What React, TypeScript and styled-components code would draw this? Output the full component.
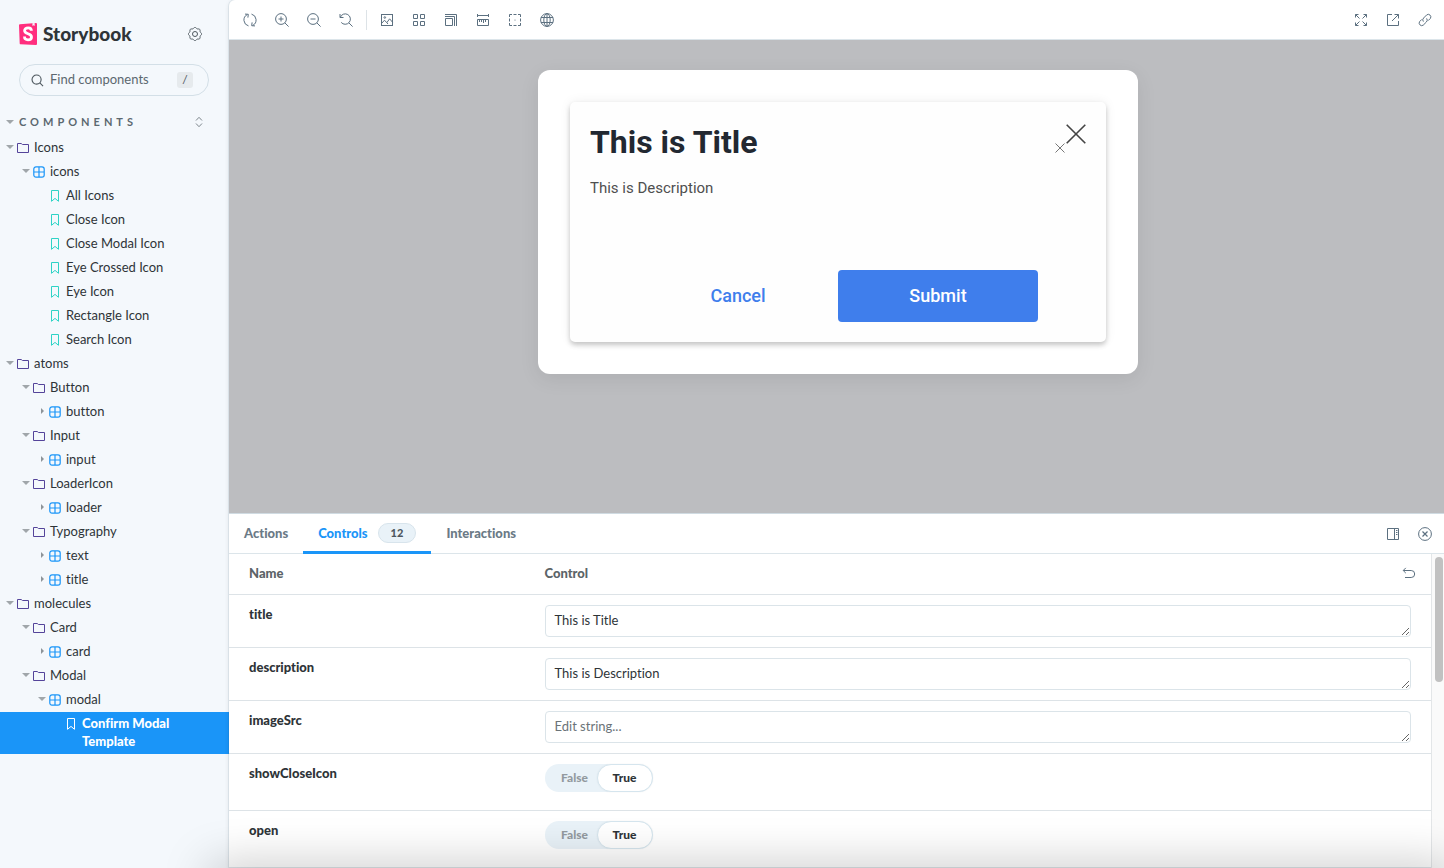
import React from "react";
import styled, { createGlobalStyle } from "styled-components";

const UI_FONT = `Lato, "Liberation Sans", sans-serif`;
const STORY_FONT = `Roboto, "Liberation Sans", sans-serif`;

const GlobalStyle = createGlobalStyle`
  *, *::before, *::after { box-sizing: border-box; }
  body {
    margin: 0;
    background: #f4f8fc;
    font-family: ${UI_FONT};
    font-variant-ligatures: none;
    color: #2e3438;
  }
  button, input, textarea { font-family: inherit; font-variant-ligatures: inherit; }
  button { border: 0; background: none; padding: 0; cursor: pointer; color: inherit; }
`;

/* ---------- icons ---------- */

const Svg = styled.svg<{ $size: number }>`
  display: block;
  flex: none;
  width: ${(p) => p.$size}px;
  height: ${(p) => p.$size}px;
  fill: none;
  stroke: currentColor;
  stroke-width: ${(p) => (p.$size === 12 ? 1.2 : 1)};
`;

type IconProps = { size?: number; children: React.ReactNode };
const Icon = ({ size = 14, children }: IconProps) => (
  <Svg $size={size} viewBox={size === 12 ? "0 0 12 12" : "0 0 14 14"} aria-hidden="true">
    {children}
  </Svg>
);

const gearPath =
  Array.from({ length: 97 }, (_, i) => {
    const t = (i / 96) * Math.PI * 2;
    const r = 6.1 + 0.5 * Math.cos(8 * t);
    return `${i ? "L" : "M"}${(7 + r * Math.cos(t)).toFixed(2)} ${(7 + r * Math.sin(t)).toFixed(2)}`;
  }).join("") + "Z";

const icons = {
  gear: (
    <>
      <path d={gearPath} />
      <circle cx="7" cy="7" r="2.5" />
    </>
  ),
  search: (
    <>
      <circle cx="6" cy="6" r="4.9" strokeWidth="1.2" />
      <path strokeWidth="1.2" d="M9.5 9.5L13 13" />
    </>
  ),
  sync: (
    <>
      <path d="M5.5 12.9A6.1 6.1 0 0 1 4.2 1.6M2 1.1L5.3 1.3L4.9 4.6" />
      <path d="M8.5 1.1A6.1 6.1 0 0 1 9.8 12.4M12 12.9L8.7 12.7L9.1 9.4" />
    </>
  ),
  zoomIn: (
    <>
      <circle cx="6" cy="6" r="5.4" />
      <path d="M9.8 9.8L13.6 13.6M6 3.5V8.5M3.5 6H8.5" />
    </>
  ),
  zoomOut: (
    <>
      <circle cx="6" cy="6" r="5.4" />
      <path d="M9.8 9.8L13.6 13.6M3.5 6H8.5" />
    </>
  ),
  zoomReset: <path d="M1 1V4.5H4.5M1.3 4.3A5.2 5.2 0 1 1 2.2 9.4M9.8 9.8L13.6 13.6" />,
  photo: (
    <>
      <rect x="1.5" y="1.5" width="11" height="11" />
      <circle cx="4.8" cy="4.5" r="0.8" />
      <path d="M1.5 10.5L4.5 7.2L6.8 9.7L9.6 5.8L12.5 9.2M6.8 9.7L8 11" />
    </>
  ),
  grid: (
    <path d="M1.5 1.5H5.5V5.5H1.5ZM8.5 1.5H12.5V5.5H8.5ZM1.5 8.5H5.5V12.5H1.5ZM8.5 8.5H12.5V12.5H8.5Z" />
  ),
  grow: <path d="M1.5 5.5H8.5V12.5H1.5ZM1 3.5H10.5V13M1 1.5H12.5V13" />,
  ruler: (
    <path d="M1.5 1V4M12.5 1V4M1.5 2.5H12.5M1.5 6.5H12.5V12.5H1.5ZM3.5 6.5V9M5.5 6.5V9M7.5 6.5V10M9.5 6.5V9" />
  ),
  outline: (
    <>
      <path d="M1.5 4V1.5H4M10 1.5H12.5V4M12.5 10V12.5H10M4 12.5H1.5V10M5.5 1.5H8.5M5.5 12.5H8.5M1.5 5.5V8.5M12.5 5.5V8.5" />
      <circle cx="7" cy="7" r="0.6" fill="currentColor" stroke="none" />
    </>
  ),
  globe: (
    <>
      <circle cx="7" cy="7" r="6.4" />
      <ellipse cx="7" cy="7" rx="3.2" ry="6.4" />
      <path d="M7 .6V13.4M1 4.5H13M1 9.5H13" />
    </>
  ),
  expand: (
    <path d="M1.5 4.5V1.5H4.5M9.5 1.5H12.5V4.5M12.5 9.5V12.5H9.5M4.5 12.5H1.5V9.5M1.5 1.5L5.5 5.5M12.5 1.5L8.5 5.5M12.5 12.5L8.5 8.5M1.5 12.5L5.5 8.5" />
  ),
  share: <path d="M6 1.5H1.5V12.5H12.5V8M8.5 1.5H12.5V5.5M12.5 1.5L6 8" />,
  link: (
    <path d="M5.4 8.6A2.7 2.7 0 0 1 5.6 5L8.8 1.8A2.6 2.6 0 0 1 12.4 5.4L10.2 7.6M8.6 5.4A2.7 2.7 0 0 1 8.4 9L5.2 12.2A2.6 2.6 0 0 1 1.6 8.6L3.8 6.4" />
  ),
  sidebarRight: <path d="M1.5 1.5H12.5V12.5H1.5ZM8.5 1.5V12.5M10 3.5H11.5M10 5.5H11.5M10 7.5H11.5" />,
  close: (
    <>
      <circle cx="7" cy="7" r="6.4" />
      <path strokeWidth="1.2" d="M4.5 4.5L9.5 9.5M9.5 4.5L4.5 9.5" />
    </>
  ),
  undo: <path d="M3.8 1.9L1.2 4.5L3.8 7.1M1.4 4.5H9.2A3.5 3.5 0 0 1 9.2 11.5H3" />,
  expandAll: <path strokeWidth="1" d="M3 4.5L6 1.3L9 4.5M3 7.5L6 10.7L9 7.5" />,
  folder: <path strokeWidth="1" d="M.5 10.5V1.5H4.2L5.5 2.5H11.5V10.5Z" />,
  component: (
    <>
      <rect x=".8" y=".8" width="10.4" height="10.4" rx="2.2" />
      <path d="M6 1V11M1 6H11" />
    </>
  ),
  story: <path strokeWidth="1" d="M2.5 .5H9.5V11.3L6 8.4L2.5 11.3Z" />,
};

type IconName = keyof typeof icons;

/* ---------- sidebar ---------- */

const Layout = styled.div`
  position: relative;
  display: flex;
  height: 100vh;
  overflow: hidden;
`;

const WindowShade = styled.div`
  position: absolute;
  left: 220px;
  right: 0;
  bottom: -20px;
  height: 10px;
  box-shadow: 0 0 48px 10px rgba(0, 0, 0, 0.28);
  pointer-events: none;
`;

const Sidebar = styled.nav`
  flex: none;
  width: 229px;
  background: #f4f8fc;
`;

const SidebarTop = styled.header`
  display: flex;
  align-items: center;
  justify-content: space-between;
  padding: 20px 27px 0 19px;
  height: 48px;
`;

const Brand = styled.a`
  display: flex;
  align-items: center;
  gap: 6px;
  color: #2e3438;
  font-size: 19px;
  line-height: 28px;
  font-weight: 900;
  text-decoration: none;
`;

const BrandMark = styled.svg`
  display: block;
  width: 18px;
  height: 22px;
`;

const GearButton = styled.button`
  color: #4d575e;
`;

const Search = styled.label`
  display: flex;
  align-items: center;
  gap: 6px;
  height: 32px;
  margin: 16px 20px 0 19px;
  padding: 0 15px 0 11px;
  border: 1px solid #d3dfe7;
  border-radius: 16px;
  color: #4d575e;
`;

const SearchInput = styled.input`
  flex: 1;
  min-width: 0;
  border: 0;
  padding: 0 0 2px;
  background: none;
  outline: none;
  font-size: 13px;
  line-height: 20px;
  color: #2e3438;
  &::placeholder {
    color: #5c6870;
    opacity: 1;
  }
`;

const KeyHint = styled.kbd`
  width: 16px;
  height: 16px;
  border-radius: 3px;
  background: #e6eaed;
  color: #4d575e;
  font: 12px/16px ${UI_FONT};
  text-align: center;
`;

const SectionHead = styled.div`
  display: flex;
  align-items: center;
  justify-content: space-between;
  height: 20px;
  margin-top: 16px;
  padding: 0 24px 0 6px;
  color: #5c6870;
`;

const SectionButton = styled.button`
  display: flex;
  align-items: center;
  gap: 5px;
  font-size: 11px;
  line-height: 16px;
  font-weight: 700;
  letter-spacing: 4px;
`;

const FaintButton = styled.button`
  color: #7d868c;
`;

const Tree = styled.ul`
  list-style: none;
  margin: 4px 0 0;
  padding: 0;
`;

const Node = styled.button<{ $depth: number; $selected?: boolean }>`
  display: flex;
  align-items: flex-start;
  width: 100%;
  padding: 2px 20px 4px ${(p) => 6 + p.$depth * 16}px;
  font-size: 13px;
  line-height: 18px;
  text-align: left;
  font-weight: ${(p) => (p.$selected ? 900 : 400)};
  color: ${(p) => (p.$selected ? "#fff" : "#2e3438")};
  background: ${(p) => (p.$selected ? "#1a95f8" : "transparent")};
`;

const CaretSlot = styled.span`
  display: flex;
  align-items: center;
  justify-content: center;
  flex: none;
  width: 8px;
  height: 18px;
`;

const Caret = styled.span<{ $open?: boolean }>`
  border-style: solid;
  border-color: transparent;
  ${(p) =>
    p.$open
      ? "border-width: 4px 4px 0; border-top-color: #a0a6aa;"
      : "border-width: 3px 0 3px 3px; border-left-color: #8d9499;"}
`;

const KindSlot = styled.span<{ $color: string }>`
  display: flex;
  align-items: center;
  flex: none;
  height: 18px;
  padding-top: 2px;
  margin: 0 5px 0 3px;
  color: ${(p) => p.$color};
`;

type Kind = "folder" | "component" | "story";
type Item = { label: string; depth: number; kind: Kind; open?: boolean; selected?: boolean };

const kindColor: Record<Kind, string> = {
  folder: "#54449a",
  component: "#1a95f8",
  story: "#2ed3c6",
};

const items: Item[] = [
  { label: "Icons", depth: 0, kind: "folder", open: true },
  { label: "icons", depth: 1, kind: "component", open: true },
  { label: "All Icons", depth: 2, kind: "story" },
  { label: "Close Icon", depth: 2, kind: "story" },
  { label: "Close Modal Icon", depth: 2, kind: "story" },
  { label: "Eye Crossed Icon", depth: 2, kind: "story" },
  { label: "Eye Icon", depth: 2, kind: "story" },
  { label: "Rectangle Icon", depth: 2, kind: "story" },
  { label: "Search Icon", depth: 2, kind: "story" },
  { label: "atoms", depth: 0, kind: "folder", open: true },
  { label: "Button", depth: 1, kind: "folder", open: true },
  { label: "button", depth: 2, kind: "component" },
  { label: "Input", depth: 1, kind: "folder", open: true },
  { label: "input", depth: 2, kind: "component" },
  { label: "LoaderIcon", depth: 1, kind: "folder", open: true },
  { label: "loader", depth: 2, kind: "component" },
  { label: "Typography", depth: 1, kind: "folder", open: true },
  { label: "text", depth: 2, kind: "component" },
  { label: "title", depth: 2, kind: "component" },
  { label: "molecules", depth: 0, kind: "folder", open: true },
  { label: "Card", depth: 1, kind: "folder", open: true },
  { label: "card", depth: 2, kind: "component" },
  { label: "Modal", depth: 1, kind: "folder", open: true },
  { label: "modal", depth: 2, kind: "component", open: true },
  { label: "Confirm Modal Template", depth: 3, kind: "story", selected: true },
];

/* ---------- main area ---------- */

const Main = styled.main`
  flex: 1;
  min-width: 0;
  display: flex;
  flex-direction: column;
  background: #fff;
  border-top-left-radius: 6px;
  overflow: hidden;
  box-shadow: 0 0 0 1px rgba(38, 85, 115, 0.08), 0 1px 5px rgba(0, 0, 0, 0.1);
`;

const Bar = styled.div`
  flex: none;
  display: flex;
  align-items: center;
  justify-content: space-between;
  height: 40px;
  padding: 0 5px 0 7px;
  border-bottom: 1px solid #dce5ea;
`;

const Tools = styled.div`
  display: flex;
  align-items: center;
  gap: 4px;
`;

const ToolButton = styled.button`
  display: flex;
  align-items: center;
  justify-content: center;
  width: 28px;
  height: 28px;
  color: #5c7080;
`;

const Divider = styled.span`
  width: 1px;
  height: 20px;
  margin: 0 2px;
  background: #dde3e7;
`;

const Canvas = styled.section`
  flex: 1;
  min-height: 0;
  padding: 30px 0 0 3px;
  background: #bcbdc0;
  font-family: ${STORY_FONT};
`;

const Dialog = styled.div`
  max-width: 600px;
  margin: 0 auto;
  padding: 32px;
  border-radius: 12px;
  background: #fff;
  box-shadow: 0 5px 20px rgba(0, 0, 0, 0.08);
`;

const Card = styled.div`
  padding: 20px;
  border-radius: 5px;
  background: #fefefe;
  box-shadow: 0 3px 5px rgba(0, 0, 0, 0.2), 0 0 12px rgba(0, 0, 0, 0.07);
`;

const CardHead = styled.div`
  display: flex;
  justify-content: space-between;
`;

const Title = styled.h1`
  margin: 0;
  font-size: 32px;
  line-height: 40px;
  font-weight: 700;
  color: #222831;
`;

const CloseGroup = styled.div`
  display: flex;
  gap: 1px;
  padding-top: 2px;
`;

const CloseButton = styled.button<{ $small?: boolean }>`
  align-self: flex-start;
  margin-top: ${(p) => (p.$small ? 19 : 0)}px;
  color: ${(p) => (p.$small ? "#777" : "#444")};
`;

const Description = styled.p`
  margin: 16px 0 72px;
  font-size: 15px;
  line-height: 20px;
  color: #4f4f4f;
`;

const Actions = styled.div`
  display: flex;
  justify-content: center;
`;

const ActionButton = styled.button<{ $primary?: boolean }>`
  width: 200px;
  height: 52px;
  border-radius: 4px;
  font-size: 18px;
  line-height: 24px;
  font-weight: 500;
  color: ${(p) => (p.$primary ? "#fff" : "#3f7eec")};
  background: ${(p) => (p.$primary ? "#3f7eec" : "transparent")};
`;

/* ---------- addon panel ---------- */

const Panel = styled.section`
  flex: 0 0 355px;
  display: flex;
  flex-direction: column;
  border-top: 1px solid #d0dbe2;
`;

const Tabs = styled.div`
  display: flex;
  align-self: stretch;
`;

const PanelBar = styled(Bar)`
  padding-left: 0;
`;

const Tab = styled.button<{ $active?: boolean }>`
  display: flex;
  align-items: center;
  gap: 10px;
  height: 40px;
  padding: 1px 15px 0;
  border-bottom: 3px solid ${(p) => (p.$active ? "#1a95f8" : "transparent")};
  font-size: 13px;
  line-height: 20px;
  font-weight: 900;
  color: ${(p) => (p.$active ? "#1a95f8" : "#6b7a86")};
`;

const Badge = styled.span`
  padding: 0 12px;
  border: 1px solid #d8e4ec;
  border-radius: 10px;
  background: #e9f2f8;
  color: #4d575e;
  font-size: 11px;
  line-height: 18px;
`;

const PanelBody = styled.div`
  flex: 1;
  min-height: 0;
  display: flex;
  overflow: hidden;
`;

const Table = styled.table`
  flex: 1;
  align-self: flex-start;
  border-collapse: separate;
  border-spacing: 0;
  table-layout: fixed;
  width: 100%;
  font-size: 13px;
  line-height: 20px;
`;

const HeadCell = styled.th<{ $width?: string }>`
  width: ${(p) => p.$width || "auto"};
  height: 41px;
  padding: 0 15px 2px;
  border-bottom: 1px solid #dde3e7;
  text-align: left;
  font-weight: 900;
  color: #5c6468;
  &:first-child {
    padding-left: 20px;
  }
`;

const HeadRow = styled.div`
  display: flex;
  align-items: center;
  justify-content: space-between;
`;

const ResetButton = styled.button`
  color: #5c7080;
`;

const NameCell = styled.th`
  padding: 9px 15px 10px 20px;
  border-bottom: 1px solid #dde3e7;
  vertical-align: top;
  text-align: left;
  font-weight: 900;
  color: #2e3438;
`;

const ControlCell = styled.td<{ $tall?: boolean }>`
  padding: 10px 20px ${(p) => (p.$tall ? 18 : 10)}px 15px;
  border-bottom: 1px solid #dde3e7;
  vertical-align: top;
`;

const TextControl = styled.textarea`
  display: block;
  width: 100%;
  height: 32px;
  padding: 4px 9px;
  border: 1px solid #dbe4e9;
  border-radius: 4px;
  outline: none;
  overflow: hidden;
  resize: vertical;
  background: #fff;
  color: #2e3438;
  font-size: 13px;
  line-height: 20px;
  &::placeholder {
    color: #6b7378;
    opacity: 1;
  }
`;

const Switch = styled.label`
  position: relative;
  display: inline-flex;
  vertical-align: top;
  height: 28px;
  border-radius: 14px;
  background: #e9f2f8;
  font-size: 12px;
  line-height: 28px;
  font-weight: 900;
  cursor: pointer;
`;

const SwitchInput = styled.input`
  position: absolute;
  inset: 0;
  width: 100%;
  height: 100%;
  margin: 0;
  opacity: 0;
`;

const SwitchOption = styled.span<{ $on?: boolean }>`
  width: ${(p) => (p.$on ? 56 : 52)}px;
  padding-left: ${(p) => (p.$on ? 0 : 8)}px;
  line-height: ${(p) => (p.$on ? 26 : 28)}px;
  text-align: center;
  border: ${(p) => (p.$on ? "1px solid #d5e5ee" : "0")};
  border-radius: 14px;
  background: ${(p) => (p.$on ? "#fff" : "transparent")};
  color: ${(p) => (p.$on ? "#2e3438" : "#939a9f")};
  box-shadow: ${(p) => (p.$on ? "0 0 2px rgba(0, 0, 0, 0.05)" : "none")};
`;

const ScrollTrack = styled.div`
  flex: none;
  width: 13px;
  padding: 3px 1px 0 3px;
  border-left: 1px solid #e3e6e8;
  background: #fafafa;
`;

const ScrollThumb = styled.div`
  width: 8px;
  height: 125px;
  border-radius: 4px;
  background: #c1c1c1;
`;

const zoomTools: [IconName, string][] = [
  ["sync", "Remount component"],
  ["zoomIn", "Zoom in"],
  ["zoomOut", "Zoom out"],
  ["zoomReset", "Reset zoom"],
];
const viewTools: [IconName, string][] = [
  ["photo", "Change background"],
  ["grid", "Apply a grid"],
  ["grow", "Change viewport"],
  ["ruler", "Enable measure"],
  ["outline", "Apply outlines"],
  ["globe", "Locale"],
];
const pageTools: [IconName, string][] = [
  ["expand", "Go full screen"],
  ["share", "Open canvas in new tab"],
  ["link", "Copy canvas link"],
];

const ToolSet = ({ tools }: { tools: [IconName, string][] }) => (
  <>
    {tools.map(([name, label]) => (
      <ToolButton key={name} type="button" aria-label={label}>
        <Icon>{icons[name]}</Icon>
      </ToolButton>
    ))}
  </>
);

const textRows = [
  { name: "title", value: "This is Title" },
  { name: "description", value: "This is Description" },
  { name: "imageSrc", value: "" },
];
const switchRows = ["showCloseIcon", "open"];

export default function App() {
  return (
    <Layout>
      <GlobalStyle />
      <Sidebar aria-label="Components">
        <SidebarTop>
          <Brand href="#">
            <BrandMark viewBox="0 0 18 22" aria-hidden="true">
              <path
                fill="#ff2e7e"
                d="M.9 1.2L16.9.1Q18 0 18 1V21Q18 22 17 22L1.6 21.3Q.8 21.2.7 20.4L0 2.2Q0 1.3.9 1.2Z"
              />
              <path fill="#f4f8fc" d="M13.4.3L15.6.1L15.7 2.9L14.7 2.2L13.5 3Z" />
              <path
                fill="none"
                stroke="#fff"
                strokeWidth="2.8"
                d="M12.4 7.8C12.4 5.5 11 4.9 9.2 4.9C7 4.9 5.6 5.9 5.6 7.7C5.6 11.5 12.5 10 12.5 13.9C12.5 15.8 11 16.8 9 16.8C6.8 16.8 5.4 15.8 5.5 13.5"
              />
            </BrandMark>
            Storybook
          </Brand>
          <GearButton type="button" aria-label="Settings">
            <Icon>{icons.gear}</Icon>
          </GearButton>
        </SidebarTop>
        <Search>
          <Icon size={13}>{icons.search}</Icon>
          <SearchInput type="text" placeholder="Find components" aria-label="Find components" />
          <KeyHint>/</KeyHint>
        </Search>
        <SectionHead>
          <SectionButton type="button">
            <CaretSlot>
              <Caret $open />
            </CaretSlot>
            COMPONENTS
          </SectionButton>
          <FaintButton type="button" aria-label="Expand all">
            <Icon size={12}>{icons.expandAll}</Icon>
          </FaintButton>
        </SectionHead>
        <Tree>
          {items.map((it, i) => (
            <li key={i}>
              <Node type="button" $depth={it.depth} $selected={it.selected}>
                <CaretSlot>{it.kind !== "story" && <Caret $open={it.open} />}</CaretSlot>
                <KindSlot $color={it.selected ? "#fff" : kindColor[it.kind]}>
                  <Icon size={12}>{icons[it.kind]}</Icon>
                </KindSlot>
                <span>{it.label}</span>
              </Node>
            </li>
          ))}
        </Tree>
      </Sidebar>

      <Main>
        <Bar>
          <Tools>
            <ToolSet tools={zoomTools} />
            <Divider />
            <ToolSet tools={viewTools} />
          </Tools>
          <Tools>
            <ToolSet tools={pageTools} />
          </Tools>
        </Bar>

        <Canvas>
          <Dialog role="dialog" aria-labelledby="dialog-title">
            <Card>
              <CardHead>
                <Title id="dialog-title">This is Title</Title>
                <CloseGroup>
                  <CloseButton type="button" aria-label="Dismiss" $small>
                    <Svg $size={10} viewBox="0 0 10 10" aria-hidden="true">
                      <path d="M.5 .5L9.5 9.5M9.5 .5L.5 9.5" />
                    </Svg>
                  </CloseButton>
                  <CloseButton type="button" aria-label="Close">
                    <Svg $size={20} viewBox="0 0 20 20" aria-hidden="true">
                      <path strokeWidth="1.6" d="M.7 .7L19.3 19.3M19.3 .7L.7 19.3" />
                    </Svg>
                  </CloseButton>
                </CloseGroup>
              </CardHead>
              <Description>This is Description</Description>
              <Actions>
                <ActionButton type="button">Cancel</ActionButton>
                <ActionButton type="button" $primary>
                  Submit
                </ActionButton>
              </Actions>
            </Card>
          </Dialog>
        </Canvas>

        <Panel>
          <PanelBar>
            <Tabs role="tablist">
              <Tab type="button" role="tab">
                Actions
              </Tab>
              <Tab type="button" role="tab" aria-selected="true" $active>
                Controls <Badge>12</Badge>
              </Tab>
              <Tab type="button" role="tab">
                Interactions
              </Tab>
            </Tabs>
            <Tools>
              <ToolSet
                tools={[
                  ["sidebarRight", "Change addon orientation"],
                  ["close", "Hide addons"],
                ]}
              />
            </Tools>
          </PanelBar>
          <PanelBody>
            <Table>
              <thead>
                <tr>
                  <HeadCell $width="25%">Name</HeadCell>
                  <HeadCell>
                    <HeadRow>
                      Control
                      <ResetButton type="button" aria-label="Reset controls">
                        <Icon>{icons.undo}</Icon>
                      </ResetButton>
                    </HeadRow>
                  </HeadCell>
                </tr>
              </thead>
              <tbody>
                {textRows.map((row) => (
                  <tr key={row.name}>
                    <NameCell scope="row">
                      <label htmlFor={`control-${row.name}`}>{row.name}</label>
                    </NameCell>
                    <ControlCell>
                      <TextControl
                        id={`control-${row.name}`}
                        defaultValue={row.value}
                        placeholder="Edit string..."
                        rows={1}
                      />
                    </ControlCell>
                  </tr>
                ))}
                {switchRows.map((name) => (
                  <tr key={name}>
                    <NameCell scope="row">{name}</NameCell>
                    <ControlCell $tall>
                      <Switch>
                        <SwitchInput type="checkbox" role="switch" aria-label={name} defaultChecked />
                        <SwitchOption>False</SwitchOption>
                        <SwitchOption $on>True</SwitchOption>
                      </Switch>
                    </ControlCell>
                  </tr>
                ))}
              </tbody>
            </Table>
            <ScrollTrack>
              <ScrollThumb />
            </ScrollTrack>
          </PanelBody>
        </Panel>
      </Main>
      <WindowShade />
    </Layout>
  );
}
